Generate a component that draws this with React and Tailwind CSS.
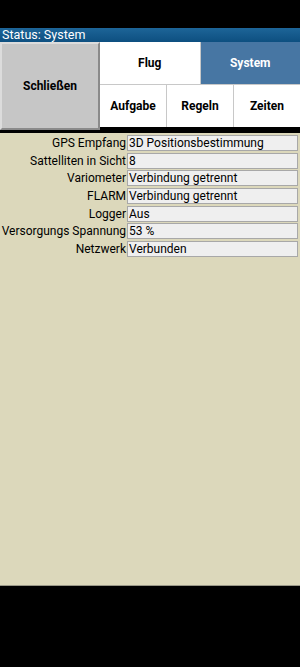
import React from 'react';

const rows = [
  ['GPS Empfang', '3D Positionsbestimmung'],
  ['Sattelliten in Sicht', '8'],
  ['Variometer', 'Verbindung getrennt'],
  ['FLARM', 'Verbindung getrennt'],
  ['Logger', 'Aus'],
  ['Versorgungs Spannung', '53 %'],
  ['Netzwerk', 'Verbunden'],
];

const Tab = ({ label, active, className = '' }) => (
  <div
    className={`flex items-center justify-center text-[12px] font-bold ${
      active ? 'bg-[#4776a3] text-white' : 'bg-white text-black'
    } ${className}`}
  >
    {label}
  </div>
);

export default function App() {
  return (
    <div
      className="w-[300px] h-[667px] bg-black flex flex-col"
      style={{ fontFamily: 'Roboto, "Liberation Sans", sans-serif' }}
    >
      <div className="h-[28px]" />
      <div className="h-[14px] bg-gradient-to-b from-[#1d6598] to-[#0d4f80] text-white text-[12.5px] leading-[14px] pl-[2px]">
        Status: System
      </div>

      <div className="flex h-[88px]">
        <div className="w-[100px] bg-[#c6c6c6] border-t-[2px] border-l-[2px] border-[#dcdcdc] border-r-[2px] border-r-[#8a8a8a] border-b-[2px] border-b-[#8a8a8a] flex items-center justify-center text-[12px] font-bold">
          Schließen
        </div>
        <div className="flex-1 flex flex-col">
          <div className="flex h-[42px]">
            <Tab label="Flug" className="flex-1 border-r border-[#c8c8c8]" />
            <Tab label="System" active className="flex-1" />
          </div>
          <div className="flex h-[43px] border-t border-[#c8c8c8]">
            <Tab label="Aufgabe" className="flex-1 border-r border-[#c8c8c8]" />
            <Tab label="Regeln" className="flex-1 border-r border-[#c8c8c8]" />
            <Tab label="Zeiten" className="flex-1" />
          </div>
        </div>
      </div>
      <div className="h-[3px]" />

      <div className="h-[453px] bg-[#dcd8bb] pt-[2px] flex flex-col gap-[1.7px] border-b border-[#9a9888]">
        {rows.map(([label, value]) => (
          <div key={label} className="flex items-center h-[16px]">
            <div className="w-[127px] text-right pr-[1px] text-[12px] text-black leading-[16px] whitespace-nowrap">
              {label}
            </div>
            <div className="w-[171px] h-[16px] bg-[#efefef] border border-[#a8a8a8] text-[12px] leading-[14px] pl-[1px] text-black">
              {value}
            </div>
          </div>
        ))}
      </div>
    </div>
  );
}
